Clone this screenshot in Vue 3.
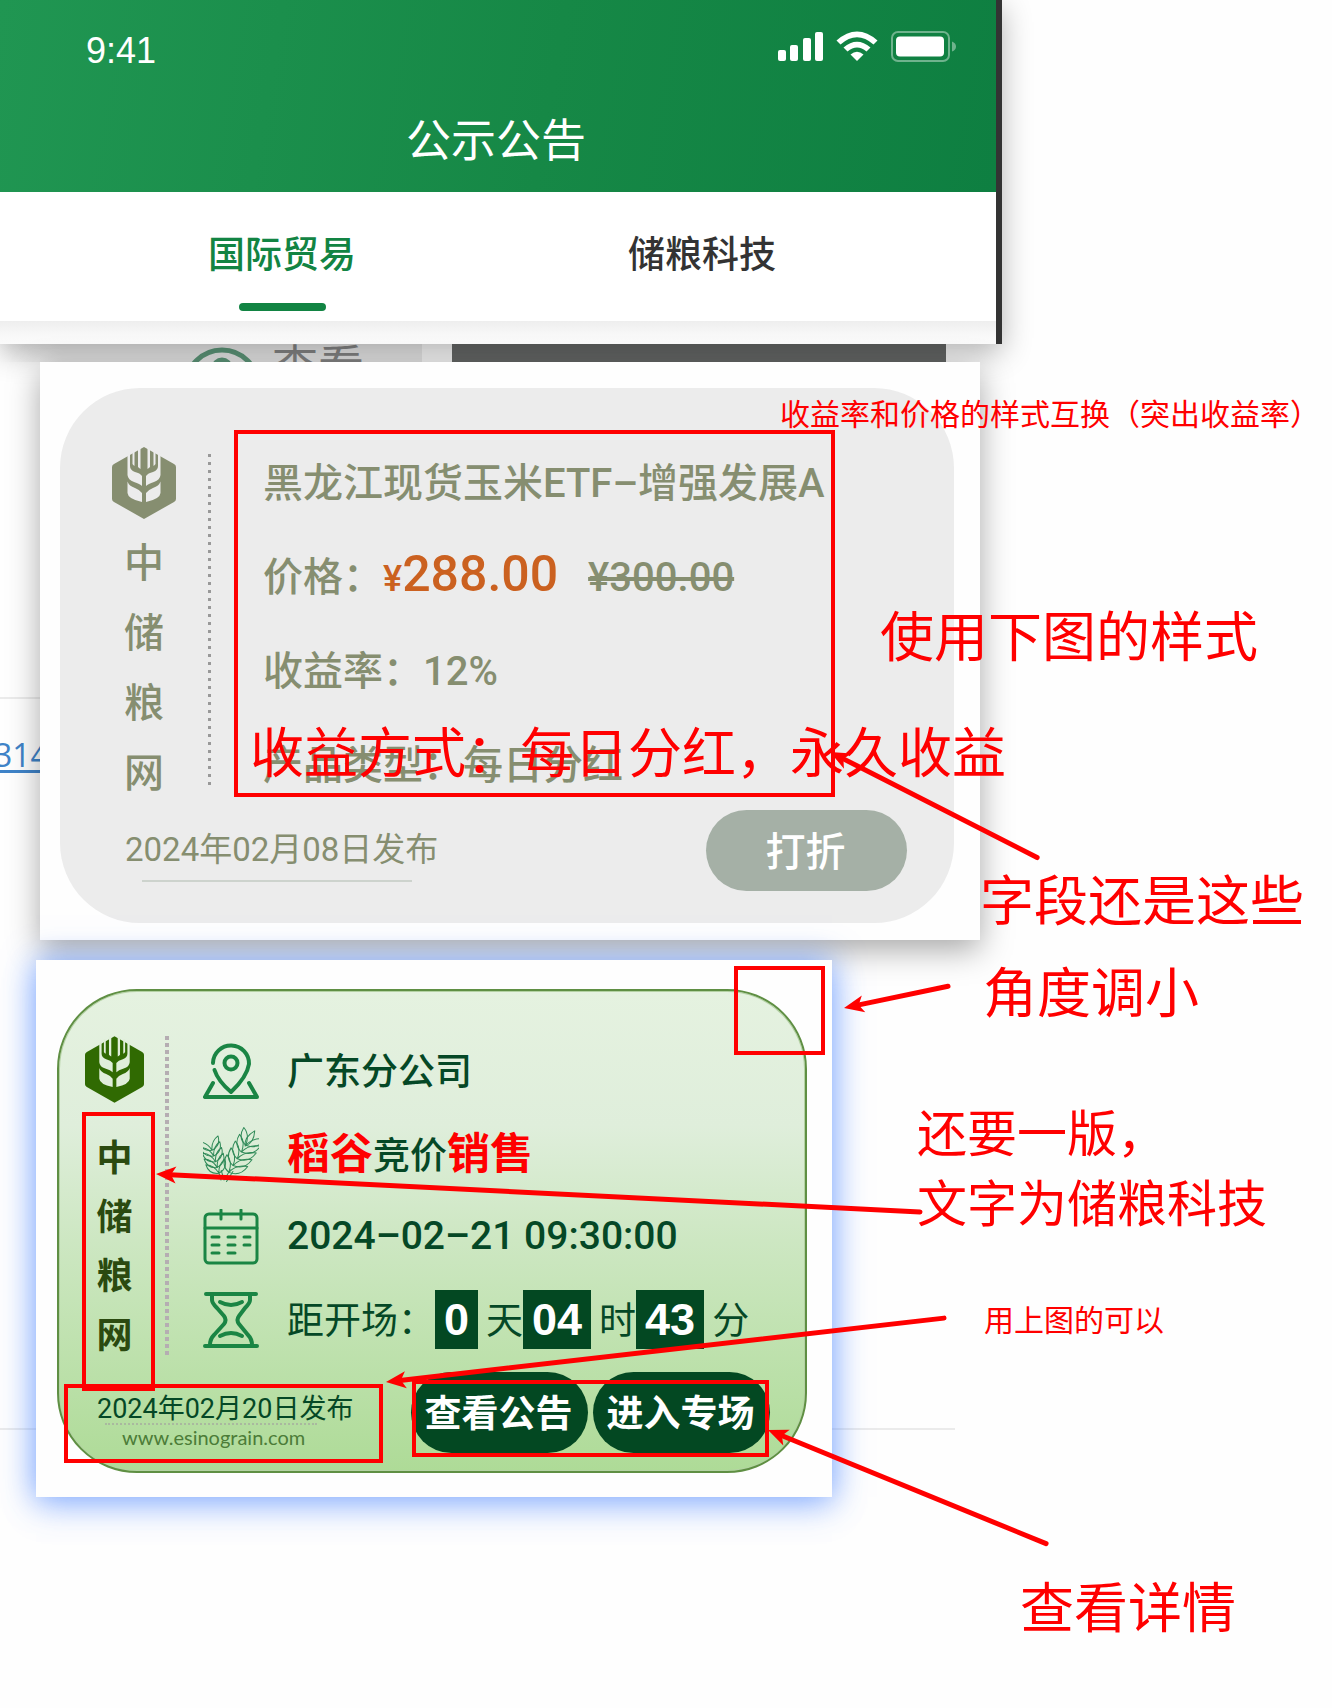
<script setup>
import { ref } from 'vue'

const tabs = ['国际贸易', '储粮科技']
const activeTab = ref('国际贸易')
const brand = ['中', '储', '粮', '网']
const countdown = [
  { value: '0', unit: '天' },
  { value: '04', unit: '时' },
  { value: '43', unit: '分' }
]

// Free-placed review notes on the board
const notes = [
  { lines: ['收益率和价格的样式互换（突出收益率）'], x: 780, y: 395, size: 'small' },
  { lines: ['使用下图的样式'], x: 880, y: 604, size: 'large' },
  { lines: ['收益方式：每日分红，永久收益'], x: 250, y: 720, size: 'large' },
  { lines: ['字段还是这些'], x: 980, y: 868, size: 'large' },
  { lines: ['角度调小'], x: 983, y: 960, size: 'large' },
  { lines: ['还要一版，', '文字为储粮科技'], x: 917, y: 1100, size: 'medium' },
  { lines: ['用上图的可以'], x: 984, y: 1301, size: 'small' },
  { lines: ['查看详情'], x: 1020, y: 1575, size: 'large' }
]

const marks = [
  { x: 234, y: 430, w: 601, h: 367 },
  { x: 734, y: 966, w: 91, h: 89 },
  { x: 82, y: 1112, w: 73, h: 279 },
  { x: 64, y: 1384, w: 319, h: 79 },
  { x: 412, y: 1380, w: 357, h: 77 }
]

const arrows = [
  { from: [1038, 858], to: [830, 752] },
  { from: [949, 986], to: [844, 1008] },
  { from: [921, 1212], to: [156, 1174] },
  { from: [945, 1318], to: [386, 1382] },
  { from: [1047, 1544], to: [768, 1430] }
].map(({ from, to }) => {
  const length = Math.hypot(from[0] - to[0], from[1] - to[1])
  const angle = (Math.atan2(from[1] - to[1], from[0] - to[0]) * 180) / Math.PI
  return { length, transform: `translate(${to[0]} ${to[1]}) rotate(${angle})` }
})

const grains = [0, 1, 2, 3, 4]
</script>

<template>
  <main class="board">
    <svg class="defs" width="0" height="0" aria-hidden="true">
      <symbol id="grain-logo" viewBox="0 0 64 72">
        <path class="logo-body" d="M32 0 L62 17 Q64 18 64 20 V52 Q64 54 62 55 L32 72 L2 55 Q0 54 0 52 V20 Q0 18 2 17 Z" />
        <g id="logo-half" class="logo-cut">
          <path d="M15.500 7 V28 Q16 33 22 35 Q28 37 30 39 V29 Q28 26 23 25 Q18 23 18 19 V5 Z" />
          <path d="M15.500 34.500 Q17 39 23 41 Q28 43 30 46 V55 Q16 52 15.500 46 Z" />
          <path d="M20.500 3 H22.500 V19 Q21 18 20.500 17 Z" />
          <path d="M26 0 H28.500 V22 Q27 21 26 20 Z" />
        </g>
        <use href="#logo-half" transform="matrix(-1 0 0 1 64 0)" />
      </symbol>
    </svg>

    <div class="underlay" aria-hidden="true">
      <div class="underlay-left">
        <svg class="underlay-icon" viewBox="0 0 80 40">
          <circle cx="40" cy="42" r="36" /><circle cx="40" cy="24" r="8" />
        </svg>
        <span>查看</span>
      </div>
      <div class="underlay-dark"></div>
    </div>
    <hr class="rule rule-top" />
    <hr class="rule rule-bottom" />
    <a class="clipped-link" href="#">314</a>

    <section class="phone">
      <div class="phone-screen">
        <header class="app-header">
          <div class="status">
            <span class="clock">9:41</span>
            <svg class="status-icons" viewBox="0 0 180 32" aria-hidden="true">
              <rect x="0" y="19" width="8" height="11" rx="2" />
              <rect x="12" y="14" width="8" height="16" rx="2" />
              <rect x="25" y="7" width="8" height="23" rx="2" />
              <rect x="37" y="1" width="8" height="29" rx="2" />
              <path d="M58.500 9.500 Q79 -8.500 99.500 9.500 L95.500 13.500 Q79 -1 62.500 13.500 Z" />
              <path d="M65.500 16.500 Q79 5 92.500 16.500 L88.500 20.500 Q79 12.500 69.500 20.500 Z" />
              <path d="M72.500 23.500 Q79 18 85.500 23.500 L79 30 Z" />
              <rect class="battery" x="114" y="1" width="57" height="29" rx="6" />
              <rect x="118" y="5.500" width="48" height="20" rx="4" />
              <path class="battery-tip" d="M174 10.500 Q178 12 178 15.500 Q178 19 174 20.500 Z" />
            </svg>
          </div>
          <h1>公示公告</h1>
        </header>
        <nav class="tabs">
          <button
            v-for="tab in tabs"
            :key="tab"
            type="button"
            :class="{ active: tab === activeTab }"
            @click="activeTab = tab"
          >{{ tab }}</button>
        </nav>
        <div class="tabs-shadow"></div>
      </div>
    </section>

    <section class="sheet sheet-price">
      <article class="card card-grey">
        <div class="card-main">
          <div class="brand">
            <svg class="logo" aria-hidden="true"><use href="#grain-logo" /></svg>
            <span v-for="c in brand" :key="c">{{ c }}</span>
          </div>
          <div class="dots"></div>
          <div class="fields">
            <h2>黑龙江现货玉米ETF–增强发展A</h2>
            <p>价格：<span class="yen">¥</span><strong>288.00</strong><s>¥300.00</s></p>
            <p>收益率：12%</p>
            <p>产品类型：每日分红</p>
          </div>
        </div>
        <footer class="card-foot">
          <time class="published" datetime="2024-02-08">2024年02月08日发布</time>
          <button type="button" class="pill">打折</button>
        </footer>
      </article>
    </section>

    <section class="sheet sheet-auction">
      <article class="card card-green">
        <div class="card-main">
          <div class="brand">
            <svg class="logo" aria-hidden="true"><use href="#grain-logo" /></svg>
            <span v-for="c in brand" :key="c">{{ c }}</span>
          </div>
          <div class="dots"></div>
          <ul class="rows">
            <li>
              <svg class="icon" viewBox="0 0 56 56" aria-hidden="true">
                <path d="M10 20 A18 18 0 1 1 46 21 Q44 34 28 49 Q15 38 11.500 27" />
                <circle cx="28" cy="20" r="6.500" />
                <path d="M10 40 L2 54 H54 L46 40" />
              </svg>
              <span>广东分公司</span>
            </li>
            <li>
              <svg class="icon icon-wheat" viewBox="0 0 56 56" aria-hidden="true">
                <g transform="translate(18 54) rotate(-17)">
                  <path d="M0 0 V-9 M3 0 V-9" />
                  <g v-for="n in grains" :key="n" :transform="`translate(0 ${-7 - n * 6})`">
                    <path d="M0 0 Q-10 -2 -10 -12 Q-2 -9 0 0 Z M0 0 Q10 -2 10 -12 Q2 -9 0 0 Z" />
                  </g>
                </g>
                <g transform="translate(21 54) rotate(32)">
                  <path d="M0 0 V-12 M3 0 V-12" />
                  <g v-for="n in grains" :key="n" :transform="`translate(0 ${-9 - n * 8})`">
                    <path d="M0 0 Q-11 -2 -11 -14 Q-2 -11 0 0 Z M0 0 Q12 -2 13 -15 Q2 -11 0 0 Z" />
                  </g>
                  <path d="M0 -40 Q-6 -47 0 -58 Q6 -47 0 -40 Z" />
                </g>
              </svg>
              <span><b>稻谷</b>竞价<b>销售</b></span>
            </li>
            <li>
              <svg class="icon icon-calendar" viewBox="0 0 56 56" aria-hidden="true">
                <rect x="2" y="5" width="52" height="49" rx="4" />
                <path d="M2 19 H54 M18 1 V10 M38 1 V10 M9 28 H16 M25 28 H32 M41 28 H47 M9 36 H16 M25 36 H32 M41 36 H47 M9 44 H16 M25 44 H32" />
              </svg>
              <time datetime="2024-02-21T09:30:00">2024–02–21 09:30:00</time>
            </li>
            <li class="countdown">
              <svg class="icon" viewBox="0 0 56 56" aria-hidden="true">
                <path d="M3 2 H53 M2 54 H54" />
                <path d="M9 3 V8 Q9 11 14 16 L21 24 Q24 28 21 32 L11 43 Q7 47 7 53" />
                <path d="M47 3 V8 Q47 11 42 16 L36 24 Q33 28 36 32 L45 43 Q49 47 49 53" />
                <path d="M17 10 Q28 16 39 10 M17 44 Q28 38 39 44" />
              </svg>
              <span>距开场：</span>
              <template v-for="part in countdown" :key="part.unit">
                <b>{{ part.value }}</b><i>{{ part.unit }}</i>
              </template>
            </li>
          </ul>
        </div>
        <footer class="card-foot">
          <div class="source">
            <time datetime="2024-02-20">2024年02月20日发布</time>
            <a href="#">www.esinograin.com</a>
          </div>
          <div class="actions">
            <button type="button" class="pill">查看公告</button>
            <button type="button" class="pill">进入专场</button>
          </div>
        </footer>
      </article>
    </section>

    <p
      v-for="note in notes"
      :key="note.lines[0]"
      class="note"
      :class="note.size"
      :style="{ left: note.x + 'px', top: note.y + 'px' }"
    ><span v-for="line in note.lines" :key="line">{{ line }}</span></p>

    <svg class="marks" aria-hidden="true">
      <rect
        v-for="m in marks"
        :key="`${m.x}-${m.y}`"
        :x="m.x + 2"
        :y="m.y + 2"
        :width="m.w - 4"
        :height="m.h - 4"
      />
      <g v-for="a in arrows" :key="a.transform" :transform="a.transform">
        <line x1="14" y1="0" :x2="a.length - 1" y2="0" />
        <path d="M0 0 L20 -8.500 L15 0 L20 8.500 Z" />
      </g>
    </svg>
  </main>
</template>

<style>
body {
  margin: 0;
}
</style>

<style scoped>
.board {
  position: relative;
  box-sizing: border-box;
  min-height: 100vh;
  padding-bottom: 120px;
  overflow: hidden;
  background: #fefefe;
  font-family: Roboto, "Liberation Sans", "Noto Sans CJK SC", sans-serif;
}

h1, h2, p, ul {
  margin: 0;
  padding: 0;
  list-style: none;
}

button {
  padding: 0;
  border: 0;
  background: none;
  font-family: inherit;
  cursor: pointer;
}

.defs {
  position: absolute;
}

/* Remains of the page lying under the pasted windows */
.underlay {
  position: absolute;
  top: 344px;
  left: 0;
  display: flex;
  height: 18px;
  overflow: hidden;
}

.underlay-left {
  display: flex;
  width: 382px;
  padding-left: 40px;
  margin-right: 30px;
  background: linear-gradient(90deg, #fefefe, #ececec 60px);
  color: #888;
  font-size: 46px;
  line-height: 46px;
}

.underlay-icon {
  width: 80px;
  height: 40px;
  margin: 0 10px 0 142px;
  fill: none;
  stroke: #5f9a7c;
  stroke-width: 5;
}

.underlay-dark {
  width: 494px;
  background: #686a69;
}

.rule {
  position: absolute;
  left: 0;
  margin: 0;
  border: 0;
  height: 2px;
  background: #ebebeb;
}

.rule-top {
  top: 697px;
  width: 40px;
}

.rule-bottom {
  top: 1428px;
  width: 955px;
}

.clipped-link {
  position: absolute;
  top: 733px;
  left: -6px;
  color: #3f83c8;
  font: 32px/44px "Open Sans", sans-serif;
  text-underline-offset: 3px;
}

/* Phone capture */
.phone {
  position: relative;
  box-sizing: border-box;
  width: 1002px;
  max-width: 100%;
  padding-right: 6px;
  background: #333;
  box-shadow: 0 8px 28px rgba(0, 0, 0, 0.3);
}

.phone-screen {
  background: #fff;
}

.app-header {
  padding: 22px 38px 20px 86px;
  background: linear-gradient(100deg, #209652, #168846 55%, #0e7f41);
  color: #fff;
}

.status {
  display: flex;
  align-items: center;
  justify-content: space-between;
  height: 58px;
}

.clock {
  font: 36px/58px "Liberation Sans", sans-serif;
}

.status-icons {
  width: 180px;
  height: 32px;
  margin-bottom: 8px;
  fill: #fff;
}

.battery {
  fill: none;
  stroke: rgba(255, 255, 255, 0.4);
  stroke-width: 2;
}

.battery-tip {
  fill: rgba(255, 255, 255, 0.4);
}

h1 {
  margin: 32px 0 0 -52px;
  font-size: 45px;
  font-weight: 400;
  line-height: 60px;
  text-align: center;
}

.tabs {
  display: flex;
  padding: 39px 84px 10px 72px;
}

.tabs button {
  flex: 1;
  display: flex;
  flex-direction: column;
  align-items: center;
  gap: 22px;
  color: #333;
  font-size: 37px;
  font-weight: 500;
  line-height: 50px;
}

.tabs button::after {
  content: "";
  width: 87px;
  height: 8px;
  border-radius: 4px;
}

.tabs .active {
  color: #128443;
}

.tabs .active::after {
  background: #128443;
}

.tabs-shadow {
  height: 23px;
  background: linear-gradient(#eee, #f8f8f8 60%, #fbfbfb);
}

/* Pasted card sheets */
.sheet {
  position: relative;
  box-sizing: border-box;
  max-width: 100%;
  background: #fefefe;
}

.sheet-price {
  width: 940px;
  margin: 18px 0 0 40px;
  padding: 26px 26px 17px 20px;
  box-shadow: 0 10px 30px rgba(0, 0, 0, 0.34);
}

.sheet-auction {
  width: 796px;
  margin: 20px 0 0 36px;
  padding: 29px 25px 24px 21px;
  box-shadow: 0 0 30px rgba(70, 130, 255, 0.65), 0 12px 32px rgba(70, 130, 255, 0.25);
}

.card {
  box-sizing: border-box;
  border-radius: 80px;
}

.card-main {
  display: flex;
}

.brand {
  display: flex;
  flex-direction: column;
  align-items: center;
}

.card-foot {
  display: flex;
  align-items: center;
  justify-content: space-between;
}

.pill {
  height: 81px;
  padding: 0 2px 4px 0;
  border-radius: 41px;
  color: #fff;
}

.card-grey {
  --card-surface: #ececec;
  padding: 46px 0 32px 52px;
  background: var(--card-surface);
  color: #868e70;
}

.card-grey .brand {
  width: 64px;
  padding-top: 13px;
  font-size: 40px;
  font-weight: 500;
  line-height: 70px;
}

.logo {
  fill: currentColor;
}

.logo-cut {
  fill: var(--card-surface);
}

.card-grey .logo {
  width: 64px;
  height: 72px;
  margin-bottom: 10px;
}

.card-grey .dots {
  width: 3px;
  height: 332px;
  margin: 20px 52px 0 32px;
  background: repeating-linear-gradient(#999 0 3px, transparent 3px 8px);
}

.fields {
  height: 376px;
  padding-top: 3px;
  box-sizing: border-box;
}

.fields h2,
.fields p {
  height: 94px;
  font-size: 40px;
  font-weight: 500;
  line-height: 94px;
  white-space: nowrap;
}

.yen {
  color: #cb6120;
  font-size: 36px;
  line-height: 1;
}

.fields strong {
  color: #cb6120;
  font-size: 50px;
  font-weight: 500;
  line-height: 1;
}

.fields s {
  margin-left: 30px;
  font-size: 40px;
  line-height: 1;
}

.card-grey .card-foot {
  padding: 0 47px 0 13px;
}

.published {
  font-size: 33px;
  font-weight: 400;
  line-height: 60px;
}

.published::after {
  content: "";
  display: block;
  height: 2px;
  margin: 0 26px 0 17px;
  background: #cdd3cd;
}

.card-grey .pill {
  width: 201px;
  background: #a5b0a6;
  font-size: 40px;
  font-weight: 500;
}

.card-green {
  --card-surface: #e0eeda;
  padding: 38px 35px 18px 26px;
  border: 2px solid #5f8f43;
  background: linear-gradient(#e5f2e0, #dfeedb 28%, #cde7c2 52%, #aedb97);
  box-shadow: inset 0 0 0 1px #b4d2a4;
  color: #054826;
}

.card-green .brand {
  width: 59px;
  padding-top: 6px;
  color: #2b4a10;
  font-size: 36px;
  font-weight: 700;
  line-height: 59px;
}

.card-green .logo {
  width: 59px;
  height: 69px;
  margin-bottom: 26px;
  color: #306a02;
}

.card-green .dots {
  width: 4px;
  height: 319px;
  margin: 7px 34px 0 21px;
  background: repeating-linear-gradient(#b5adb2 0 4px, transparent 4px 7px);
}

.rows li {
  display: flex;
  align-items: center;
  height: 83px;
  font-size: 37px;
  font-weight: 500;
  line-height: 59px;
  white-space: nowrap;
}

.rows span,
.rows i {
  padding-top: 4px;
}

.rows span b {
  color: #f00;
  font-size: 43px;
  font-weight: 700;
}

.rows time {
  font-size: 39px;
}

.icon {
  width: 56px;
  height: 56px;
  margin-right: 28px;
  fill: none;
  stroke: #1a8544;
  stroke-width: 4;
  stroke-linecap: round;
  stroke-linejoin: round;
}

.icon-calendar {
  stroke-width: 3;
}

.icon-wheat {
  stroke: #2f8a58;
  stroke-width: 1;
}

.rows .countdown {
  font-weight: 400;
}

.countdown b {
  padding: 0 9px;
  margin-right: 8px;
  background: #034822;
  color: #fff;
  font: 700 45px/59px "Liberation Sans", sans-serif;
}

.countdown i {
  font-style: normal;
}

.card-green .card-foot {
  margin-top: 6px;
  padding-left: 12px;
}

.source {
  display: flex;
  flex-direction: column;
  padding-top: 18px;
  font-size: 27px;
  line-height: 28px;
}

.source a {
  margin: 0 36px 0 8px;
  padding-left: 17px;
  border-top: 2px dotted #a9b89f;
  color: #4c7c38;
  font: 20px/24px Lato, sans-serif;
  text-decoration: none;
}

.actions {
  display: flex;
  gap: 5px;
}

.actions .pill {
  width: 177px;
  background: #034822;
  font-size: 37px;
  font-weight: 700;
}

/* Review notes */
.note {
  position: absolute;
  display: flex;
  flex-direction: column;
  color: #f00;
  white-space: nowrap;
}

.small {
  font-size: 30px;
  line-height: 40px;
}

.medium {
  font-size: 50px;
  line-height: 70px;
}

.large {
  font-size: 54px;
  line-height: 70px;
}

.marks {
  position: absolute;
  inset: 0;
  width: 100%;
  height: 100%;
  fill: #f00;
  pointer-events: none;
}

.marks rect {
  fill: none;
  stroke: #f00;
  stroke-width: 4;
}

.marks line {
  stroke: #f00;
  stroke-width: 5;
  stroke-linecap: round;
}
</style>
